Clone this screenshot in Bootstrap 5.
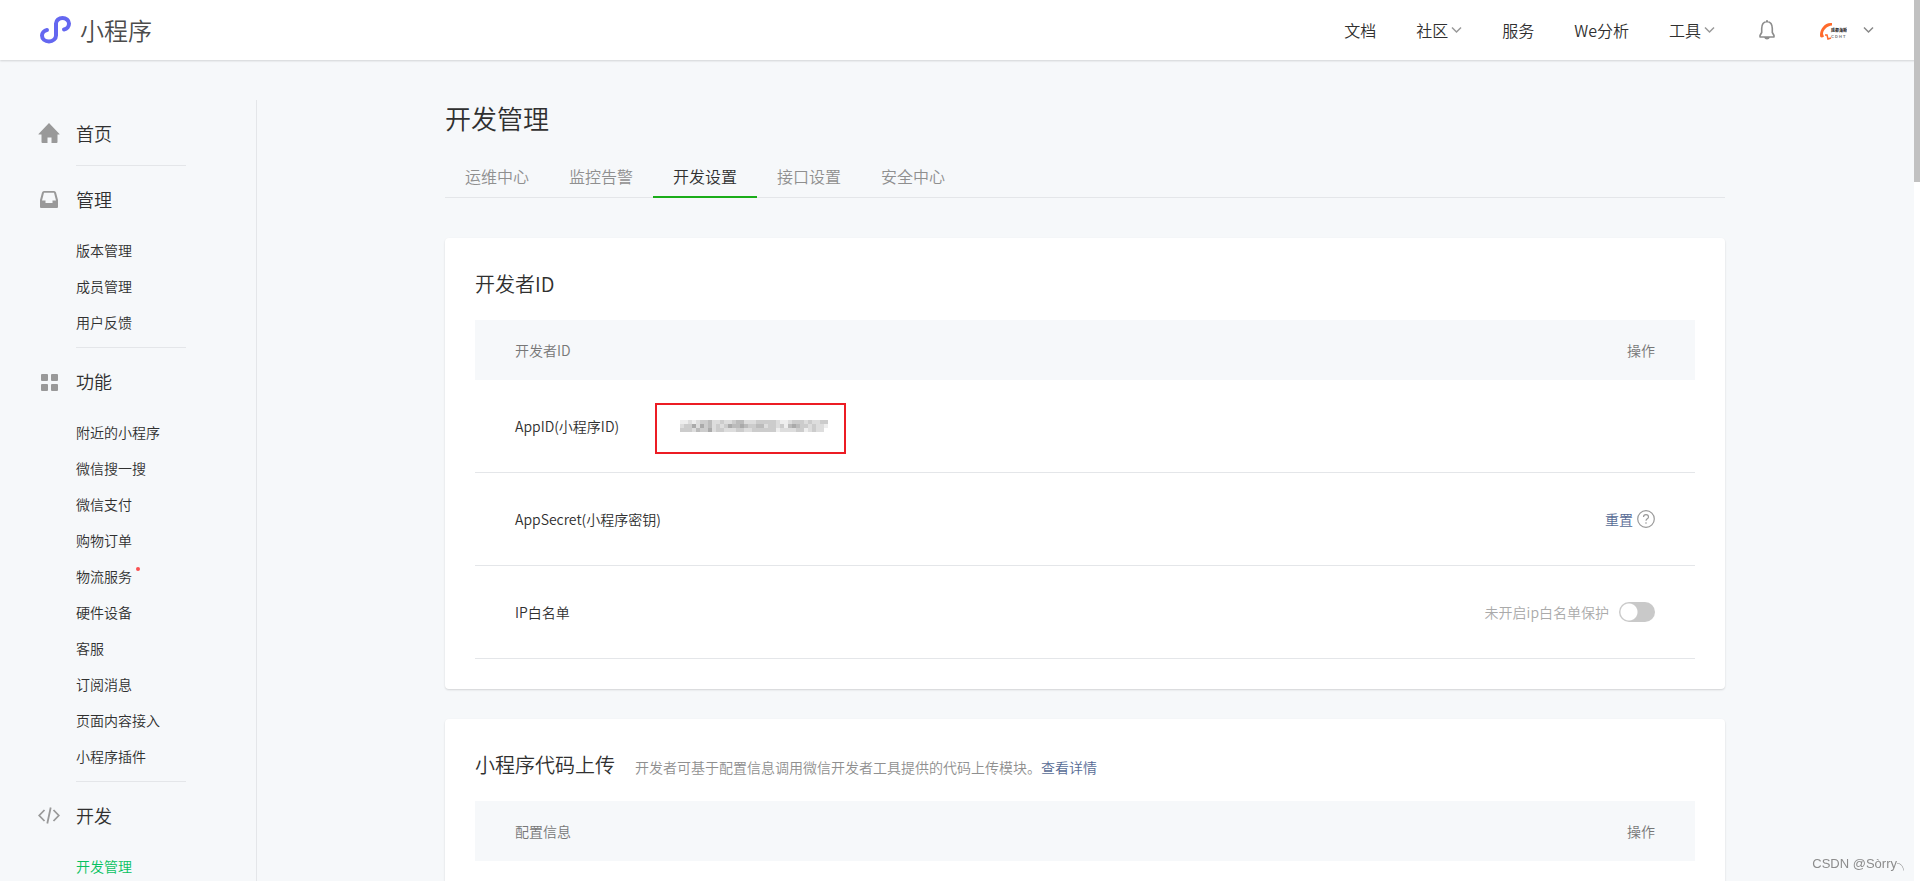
<!DOCTYPE html>
<html lang="zh-CN">
<head>
<meta charset="utf-8">
<meta name="viewport" content="width=device-width, initial-scale=1">
<title>小程序 - 开发管理</title>
<link href="https://cdn.jsdelivr.net/npm/bootstrap@5.3.0/dist/css/bootstrap.min.css" rel="stylesheet">
<style>
  body { background: #f6f8fa; color: #303030; font-family: "Noto Sans CJK SC", sans-serif; font-size: 14px; font-weight: 350; line-height: 20px; height: 100vh; overflow: hidden; }
  a { color: inherit; text-decoration: none; }
  .topbar { height: 60px; background: #fff; box-shadow: 0 1px 2px rgba(0,0,0,.15); padding: 0 46px 0 40px; }
  .brand-name { font-size: 24px; line-height: 32px; color: #4c4c4c; }
  .top-links { font-size: 16px; line-height: 24px; gap: 40px; }
  .top-links .has-menu { gap: 3px; }
  .icon-btn { padding: 0; border: 0; background: none; line-height: 0; }
  .side { width: 257px; border-right: 1px solid #e4e6e9; padding-left: 38px; }
  .side-title { height: 66px; font-size: 18px; gap: 16px; }
  .side-body { margin-left: 38px; width: 110px; border-bottom: 1px solid #e4e6e9; }
  .side-body:empty { margin-top: -1px; }
  .side-body ul { padding-bottom: 7px; }
  .side-body li { height: 36px; line-height: 36px; }
  .side-body .current { color: #07c160; }
  .new-dot { top: 1px; right: -8px; width: 4px; height: 4px; background: #fa5151; }
  .page-area { margin-top: 40px; }
  .page-main { width: 100%; max-width: 1280px; margin-left: 188px; }
  h1 { font-size: 26px; line-height: 36px; font-weight: 350; margin: 0 0 22px; }
  .tab-row { border-bottom: 1px solid #e4e6e9; font-size: 16px; line-height: 24px; margin-bottom: 40px; }
  .tab-row a { padding: 6px 20px 8px; margin-bottom: -1px; color: #8f8f8f; border-bottom: 2px solid transparent; }
  .tab-row a.active { color: #303030; border-color: #1aad19; }
  .panel { background: #fff; border-radius: 4px; box-shadow: 0 1px 2px rgba(0,0,0,.15); padding: 30px; margin-bottom: 30px; }
  .panel h2 { font-size: 20px; line-height: 32px; font-weight: 350; margin: 0; }
  .panel-head { padding-bottom: 20px; gap: 20px; }
  .panel-head p { color: #8f8f8f; }
  .info-table { border-collapse: separate; border-spacing: 0; }
  .info-table th { background: #f6f8fa; color: #777; font-weight: 350; height: 60px; padding: 0 40px; }
  .info-table td { height: 93px; padding: 0 40px; border-bottom: 1px solid #e4e6e9; }
  .link-blue { color: #576b95; }
  .id-label { min-width: 109px; }
  .id-box { border: 2px solid #ec1c24; padding: 15px 16px 20px 19px; margin: 5px 0 0 31px; line-height: 0; }
  .switch-note { color: #aaa; margin-right: 10px; }
  .ip-switch.form-check-input { width: 36px; height: 20px; margin: 0; background-color: #c9c9c9; border: 0; border-radius: 10px; background-size: 20px; background-image: radial-gradient(circle, #fff 8px, transparent 9px); background-position: left center; }
  .scroll-track { right: 0; top: 0; width: 6px; height: 100vh; background: #fff; z-index: 10; }
  .scroll-thumb { height: 182px; background: #c1c1c1; }
  .watermark { right: 10px; bottom: 6px; font: 13px/22px "Liberation Sans", "Noto Sans CJK SC", sans-serif; color: #8c8c8c; }
</style>
</head>
<body>
<header class="topbar d-flex align-items-center justify-content-between">
  <a href="#" class="d-flex align-items-center gap-2">
    <svg width="32" height="28" viewBox="0 0 32 28" fill="none" stroke="#6467f0" stroke-width="4" stroke-linecap="round"><path d="M7 14C4 14.500 2 17 2 19.500C2 23 5 25.500 9 25.500C13 25.500 16 22.500 16 19.500V7.500C16 4.500 19 2 22.500 2C26 2 29 4.500 29 7.500C29 10.500 27 13 24 13.500"/></svg>
    <span class="brand-name">小程序</span>
  </a>
  <nav class="top-links d-flex align-items-center">
    <a href="#">文档</a>
    <a href="#" class="has-menu d-flex align-items-center">社区 <svg width="11" height="8" viewBox="0 0 11 8" fill="none" stroke="#999" stroke-width="1.500"><path d="M1 1.500l4.500 4.500L10 1.500"/></svg></a>
    <a href="#">服务</a>
    <a href="#">We分析</a>
    <a href="#" class="has-menu d-flex align-items-center">工具 <svg width="11" height="8" viewBox="0 0 11 8" fill="none" stroke="#999" stroke-width="1.500"><path d="M1 1.500l4.500 4.500L10 1.500"/></svg></a>
    <button class="icon-btn mx-1" aria-label="通知"><svg width="16" height="20" viewBox="0 0 16 20" fill="none" stroke="#8c8c8c" stroke-width="1.600" stroke-linejoin="round"><path d="M8 1.500C4 2 2.700 5 2.700 8.500V12.500L1 15.500V17H15V15.500L13.300 12.500V8.500C13.300 5 12 2 8 1.500zM6 17.500C6.500 19 9.500 19 10 17.500M7 1h2"/></svg></button>
    <button class="icon-btn d-flex align-items-center gap-3" aria-label="账号">
      <svg width="28" height="20" viewBox="0 0 28 20"><path d="M13 3C6 2 1 9 1 15C1 18 3 18 5 16.500L4 14C4 10 8 6 13 5.500z" fill="#ff6a2b"/><path d="M6 15l2 0 1 4 3-1" fill="none" stroke="#ff6a2b" stroke-width="1.500"/><text x="12" y="12" font-size="4" font-weight="900" fill="#333" font-family="Noto Sans CJK SC">成都海斯</text><text x="12" y="18" font-size="4" font-weight="700" fill="#777" font-family="Liberation Sans">C D H T</text></svg>
      <svg width="11" height="8" viewBox="0 0 11 8" fill="none" stroke="#888" stroke-width="1.500"><path d="M1 1.500l4.500 4.500L10 1.500"/></svg>
    </button>
  </nav>
</header>

<div class="d-flex page-area">
  <aside class="side flex-shrink-0">
    <a href="#" class="side-title d-flex align-items-center">
      <svg width="22" height="22" viewBox="0 0 22 22" fill="#999"><path d="M11 1L21.500 12V12.500H19.500V20Q19.500 21 18.500 21H13.500V15.500H9.500V21H4.500Q3.500 21 3.500 20V12.500H.5V12z"/></svg>首页
    </a>
    <div class="side-body"></div>

    <div class="side-title d-flex align-items-center">
      <svg width="22" height="22" viewBox="0 0 22 22"><path fill="#999" fill-rule="evenodd" d="M6 3H16Q17.500 3 18 4.500L20 12V19Q20 20 19 20H3Q2 20 2 19V12L4 4.500Q4.500 3 6 3zM6 4.800L4 12.500H7.500V15H14.500V12.500H18L16 4.800z"/></svg>管理
    </div>
    <div class="side-body"><ul class="list-unstyled mb-0">
      <li><a href="#">版本管理</a></li><li><a href="#">成员管理</a></li><li><a href="#">用户反馈</a></li>
    </ul></div>

    <div class="side-title d-flex align-items-center">
      <svg width="22" height="22" viewBox="0 0 22 22" fill="#999"><rect x="3" y="4" width="7" height="7" rx="1"/><rect x="13" y="4" width="7" height="7" rx="1"/><rect x="3" y="14" width="7" height="7" rx="1"/><rect x="13" y="14" width="7" height="7" rx="1"/></svg>功能
    </div>
    <div class="side-body"><ul class="list-unstyled mb-0">
      <li><a href="#">附近的小程序</a></li><li><a href="#">微信搜一搜</a></li><li><a href="#">微信支付</a></li><li><a href="#">购物订单</a></li>
      <li><a href="#" class="position-relative">物流服务<span class="new-dot position-absolute rounded-circle"></span></a></li>
      <li><a href="#">硬件设备</a></li><li><a href="#">客服</a></li><li><a href="#">订阅消息</a></li><li><a href="#">页面内容接入</a></li><li><a href="#">小程序插件</a></li>
    </ul></div>

    <div class="side-title d-flex align-items-center">
      <svg width="22" height="22" viewBox="0 0 22 22" fill="none" stroke="#999" stroke-width="1.800"><path d="M6.500 6L1.200 11.500 6.500 17M15.500 6L20.800 11.500 15.500 17M12.700 3.500L9.300 19.500"/></svg>开发
    </div>
    <div class="side-body"><ul class="list-unstyled mb-0">
      <li><a href="#" class="current">开发管理</a></li>
    </ul></div>
  </aside>

  <main class="page-main">
    <h1>开发管理</h1>
    <nav class="tab-row d-flex">
      <a href="#">运维中心</a><a href="#">监控告警</a><a href="#" class="active" aria-current="page">开发设置</a><a href="#">接口设置</a><a href="#">安全中心</a>
    </nav>

    <section class="panel">
      <div class="panel-head"><h2>开发者ID</h2></div>
      <table class="info-table w-100">
        <thead><tr><th>开发者ID</th><th class="text-end">操作</th></tr></thead>
        <tbody>
          <tr><td><div class="d-flex align-items-center"><span class="id-label">AppID(小程序ID)</span><span class="id-box"><svg id="maskedId" width="152" height="12" shape-rendering="crispEdges" role="img" aria-label="AppID"></svg></span></div></td><td></td></tr>
          <tr><td>AppSecret(小程序密钥)</td><td><div class="d-flex justify-content-end align-items-center gap-1"><a href="#" class="link-blue">重置</a><svg width="18" height="18" viewBox="0 0 18 18" fill="none" stroke="#999" stroke-width="1.200"><circle cx="9" cy="9" r="8.300"/><path d="M6.500 7Q6.500 4.700 9 4.700T11.500 7Q11.500 8 10.300 8.800T9 10.800M9 12.200V13.800"/></svg></div></td></tr>
          <tr><td>IP白名单</td><td><div class="d-flex justify-content-end align-items-center"><label for="ipSwitch" class="switch-note">未开启ip白名单保护</label><div class="form-switch ps-0 d-flex"><input class="form-check-input ip-switch ms-0" type="checkbox" role="switch" id="ipSwitch"></div></div></td></tr>
        </tbody>
      </table>
    </section>

    <section class="panel">
      <div class="panel-head d-flex align-items-baseline"><h2>小程序代码上传</h2><p class="mb-0">开发者可基于配置信息调用微信开发者工具提供的代码上传模块。<a href="#" class="link-blue">查看详情</a></p></div>
      <table class="info-table w-100">
        <thead><tr><th>配置信息</th><th class="text-end">操作</th></tr></thead>
        <tbody><tr><td></td><td></td></tr></tbody>
      </table>
    </section>
  </main>
</div>

<div class="scroll-track position-fixed"><div class="scroll-thumb"></div></div>
<div class="watermark position-fixed">CSDN @Sòrry╮</div>

<script src="https://cdn.jsdelivr.net/npm/bootstrap@5.3.0/dist/js/bootstrap.bundle.min.js"></script>
<script>
  // Grey level of each 4px block of the masked AppID, one hex digit a block.
  const rows = [
    'feededccbddcddcbbdddcccccdeedcccdcddcc',
    'fdccadacbdcdcabbabccbbdccdcebabccdcdde',
    'fcccdbccadccdddccddcccccceddddccedcddf'
  ];
  document.getElementById('maskedId').innerHTML = rows.map((row, y) =>
    [...row].map((g, x) => `<rect x="${x * 4}" y="${y * 4}" width="4" height="4" fill="#${g.repeat(3)}"/>`).join('')).join('');
</script>
</body>
</html>
